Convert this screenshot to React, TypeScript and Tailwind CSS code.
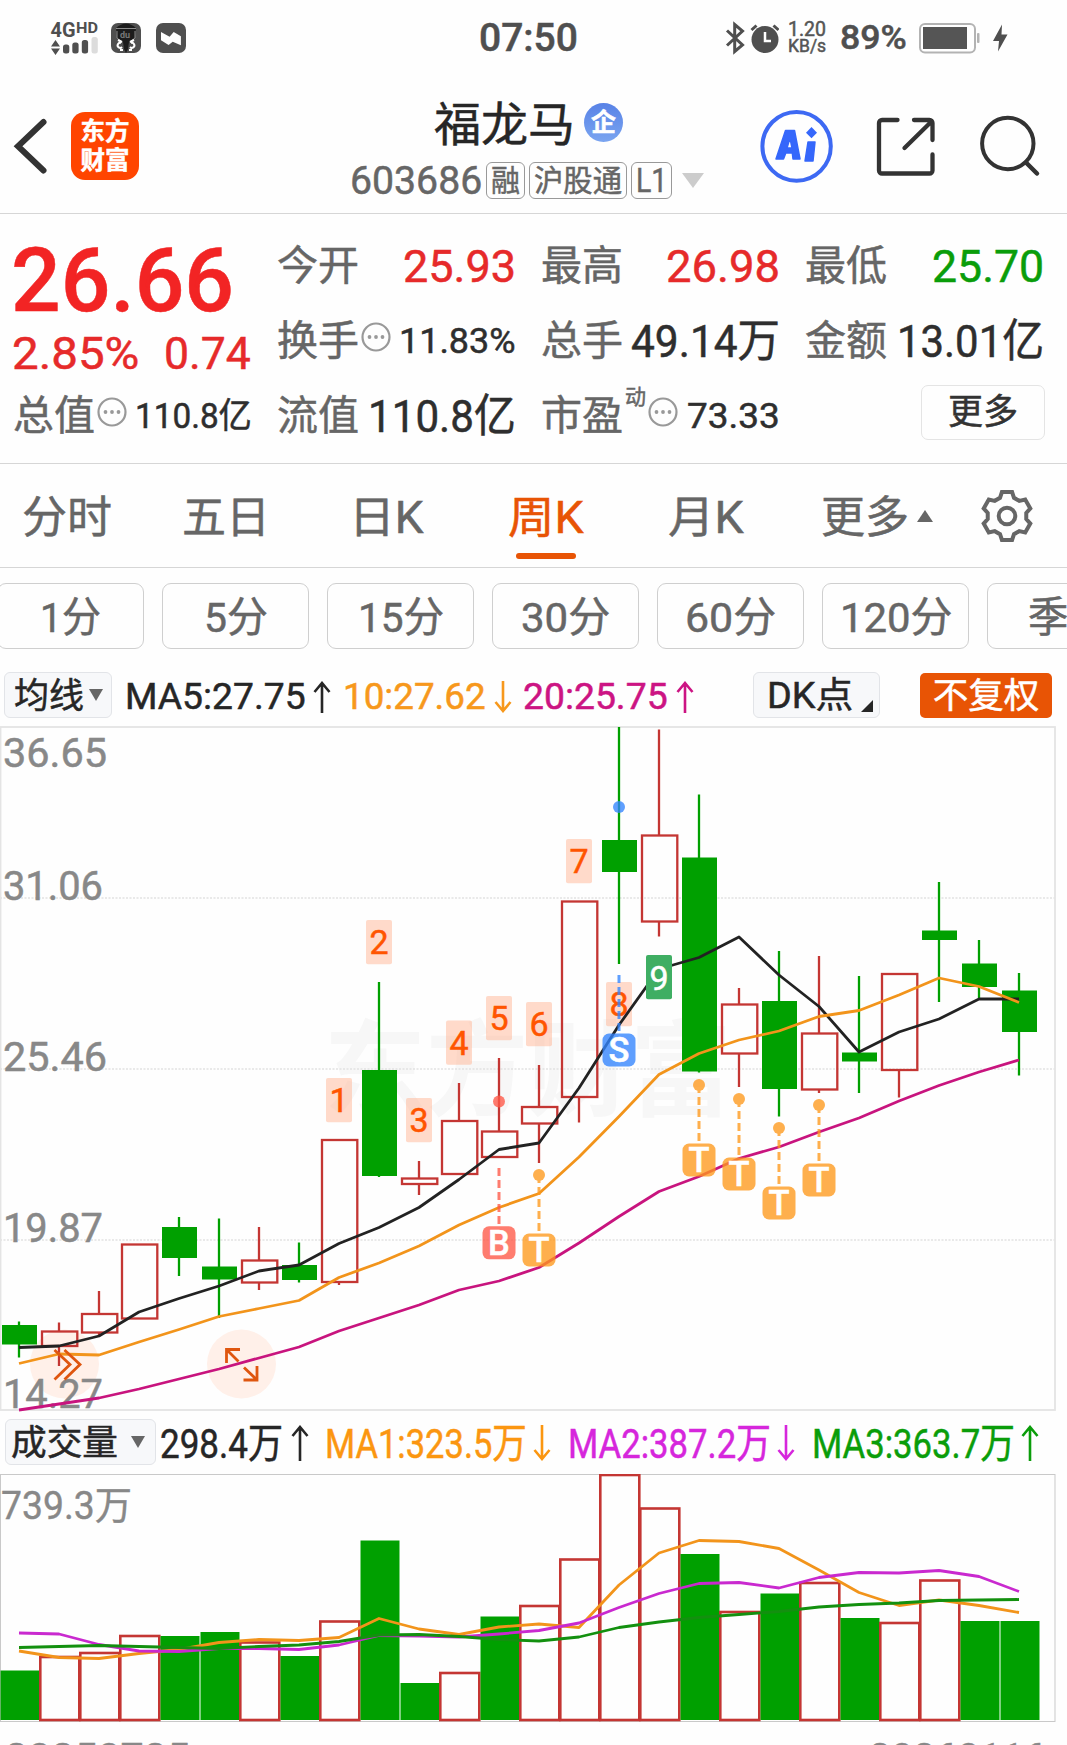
import { useLayoutEffect, useRef, useState } from "react";
import type { ReactNode } from "react";

const SANS = "Roboto, 'Noto Sans CJK SC', sans-serif";
const GREEN = "#00a000";
const RED = "#c43633";

/** Single line of text condensed or expanded to an exact advance width. */
function Fit({ w, className = "", children }: { w: number; className?: string; children: ReactNode }) {
  const ref = useRef<HTMLSpanElement>(null);
  const [k, setK] = useState(1);
  useLayoutEffect(() => {
    if (ref.current) setK(w / ref.current.offsetWidth);
  }, [w]);
  return (
    <span className={`block shrink-0 whitespace-nowrap ${className}`} style={{ width: w }}>
      <span ref={ref} className="inline-block origin-left" style={{ transform: `scaleX(${k})` }}>
        {children}
      </span>
    </span>
  );
}

function StatusBar() {
  return (
    <div className="flex h-[76px] items-center pl-[50px] text-[#4f4f4f]">
      <svg width="50" height="48" viewBox="50 12 50 48" className="block">
        <text x="50.5" y="35" fontSize="20" fontWeight="700" textLength="25" lengthAdjust="spacingAndGlyphs" fill="#4f4f4f">4G</text>
        <text x="76" y="30.5" fontSize="14.5" fontWeight="700" textLength="22" lengthAdjust="spacingAndGlyphs" fill="#4f4f4f">HD</text>
        <path d="M51 44.5L55.5 38l4.5 6.500zM51 46.500h9L55.500 53z" fill="#4f4f4f" />
        <rect x="63" y="42.500" width="6.300" height="9" rx="2.500" fill="#4f4f4f" />
        <rect x="72.300" y="40.500" width="6.300" height="11" rx="2.500" fill="#4f4f4f" />
        <rect x="81.800" y="38" width="6.300" height="13.500" rx="2.500" fill="#4f4f4f" />
        <rect x="91.500" y="35" width="6.300" height="16.500" rx="2.500" fill="#dcdcdc" />
      </svg>
      <svg width="30" height="30" viewBox="0 0 30 30" className="ml-[11px] block">
        <rect width="30" height="30" rx="7" fill="#4f4f4f" />
        <path d="M5 5Q15-4 25 5L24 15 18 19 17 26 15 30 13 26 12 19 6 15z" fill="#1c1c1c" />
        <path d="M5 5.500h20M6 8v7l5 4M24 8v7l-5 4" stroke="#8b8b8b" strokeWidth="1" fill="none" />
        <text x="9" y="14.500" fontSize="9" fontWeight="700" fill="#777">du</text>
        <path d="M7 17l4 2M23 17l-4 2M10 20a2.500 2.500 0 1 0 1 4M20 20a2.500 2.500 0 1 1-1 4M12 27h-3M18 27h3" stroke="#fff" strokeWidth="2" fill="none" />
      </svg>
      <svg width="30" height="30" viewBox="156 22 30 30" className="ml-[15px] block">
        <rect x="156" y="22" width="30" height="30" rx="7" fill="#4f4f4f" />
        <path d="M161 31l8.600 4.700L173.700 31l7.200 4.300v9L172.700 40.700 168.600 44 161 39.300z" fill="#fff" />
      </svg>
      <Fit w={99} className="ml-[293px] text-[39px] leading-[76px] font-medium">07:50</Fit>
      <svg width="54" height="34" viewBox="724 20 54 34" className="ml-[147px] block">
        <path d="M726 29.500L741.500 44l-7.800 6.500v-27L741.500 30 726 44.500" fill="none" stroke="#4f4f4f" strokeWidth="3" />
        <circle cx="764" cy="38.500" r="13.500" fill="#4f4f4f" />
        <path d="M750.500 29l5-4.500M777.500 29l-5-4.500" stroke="#4f4f4f" strokeWidth="3" />
        <path d="M764 31v9h6" fill="none" stroke="#fff" strokeWidth="2.500" />
      </svg>
      <div className="ml-[9px] flex h-[36px] flex-col text-[#555]">
        <Fit w={38} className="text-[20px] leading-[18px]">1.20</Fit>
        <Fit w={38} className="text-[17.5px] leading-[17px]">KB/s</Fit>
      </div>
      <Fit w={67} className="ml-[14px] text-[33px] leading-[76px] font-medium">89%</Fit>
      <svg width="90" height="32" viewBox="918 21 90 32" className="ml-[12px] block">
        <rect x="919" y="23" width="55" height="28.500" rx="5" fill="#fff" stroke="#b3b3b3" strokeWidth="2" />
        <rect x="922" y="26" width="44" height="22" fill="#555" />
        <rect x="976" y="32" width="2.500" height="10" rx="1" fill="#b3b3b3" />
        <path d="M1001 23.500L992 40h6l-1 10.500 9.500-17h-6z" fill="#4f4f4f" />
      </svg>
    </div>
  );
}

function Tag({ w, children }: { w: number; children: ReactNode }) {
  return (
    <span className="flex h-[37px] items-center justify-center rounded-[6px] border border-[#999] px-[4px] text-[30px] leading-[35px]">
      <Fit w={w}>{children}</Fit>
    </span>
  );
}

function Header() {
  return (
    <div className="flex h-[138px] items-start border-b border-[#d6d6d6]">
      <svg width="40" height="64" viewBox="10 114 40 64" className="mt-[38px] ml-[10px] block">
        <path d="M43.500 122L18 146.300l25.500 24.200" fill="none" stroke="#333" strokeWidth="6" strokeLinecap="round" />
      </svg>
      <div className="mt-[36px] ml-[21px] flex h-[68px] w-[68px] flex-col items-center justify-center rounded-[14px] bg-[#ff4500] text-[24.5px] leading-[29px] font-bold text-white">
        <span>东方</span>
        <span>财富</span>
      </div>
      <div className="mt-[17px] ml-[211px] flex w-[360px] flex-col">
        <div className="flex h-[60px] items-center pl-[84px]">
          <span className="pt-[3px] text-[47px] leading-[57px] text-[#262626]">福龙马</span>
          <span className="mb-[1px] ml-[9px] flex h-[39px] w-[39px] items-center justify-center rounded-full bg-linear-to-b from-[#5882e6] to-[#7ba5f0] text-[25px] leading-[39px] font-bold text-white">
            企
          </span>
        </div>
        <div className="mt-[9px] flex h-[37px] items-center gap-[4px] text-[#666]">
          <Fit w={132} className="text-[39.5px] leading-[39px]">603686</Fit>
          <Tag w={29}>融</Tag>
          <Tag w={88}>沪股通</Tag>
          <Tag w={31}>
            <span className="text-[34px]">L1</span>
          </Tag>
          <svg width="22" height="15" className="ml-[6px] block">
            <path d="M0 0h22L11 15z" fill="#ccc" />
          </svg>
        </div>
      </div>
      <svg width="74" height="76" viewBox="760 109 74 76" className="mt-[33px] ml-[50px] block">
        <ellipse cx="796.600" cy="146.300" rx="34.200" ry="34.400" fill="none" stroke="#3d69f3" strokeWidth="4" />
        <path d="M785.500 130.500h9l5.500 28.500h-7l-.7-6h-6.500l-2.300 6h-7.500zM790 138l-3 10h5z" fill="#3567fb" stroke="#3567fb" strokeWidth="1.500" strokeLinejoin="round" fillRule="evenodd" />
        <path d="M808 142h7l-2 19h-8z" fill="#3567fb" stroke="#3567fb" strokeWidth="1.500" strokeLinejoin="round" />
        <path d="M811.500 127l5.500 5.700-5.500 5.600-5.500-5.600z" fill="#3567fb" />
      </svg>
      <svg width="62" height="62" viewBox="874 116 62 62" className="mt-[40px] ml-[41px] block">
        <path d="M896.500 120H881a3 3 0 0 0-3 3v47.500a3 3 0 0 0 3 3h47.500a3 3 0 0 0 3-3V154.500M913 120h15.500a3 3 0 0 1 3 3v17M930.500 121.500L903.500 148" fill="none" stroke="#333" strokeWidth="4.300" strokeLinecap="round" />
      </svg>
      <svg width="64" height="64" viewBox="977 114 64 64" className="mt-[38px] ml-[41px] block">
        <circle cx="1006.800" cy="143.500" r="25.700" fill="none" stroke="#333" strokeWidth="4" />
        <path d="M1025 162.500l11 11" stroke="#333" strokeWidth="4.500" strokeLinecap="round" />
      </svg>
    </div>
  );
}

function Info() {
  return (
    <svg width="30" height="30" className="mr-[3px] mb-[9px] ml-[2px] block">
      <circle cx="15" cy="15" r="13.500" fill="none" stroke="#999" strokeWidth="2.200" />
      <circle cx="8.500" cy="15" r="1.900" fill="#999" />
      <circle cx="15" cy="15" r="1.900" fill="#999" />
      <circle cx="21.500" cy="15" r="1.900" fill="#999" />
    </svg>
  );
}

function Cell({ label, value, w, tone = "text-[#2e2e2e]", small = false, info = false, sup }: {
  label: string; value: string; w: number; tone?: string; small?: boolean; info?: boolean; sup?: string;
}) {
  return (
    <div className="flex h-[75px] items-center">
      <Fit w={82} className="text-[41px] leading-[77px] text-[#666]">{label}</Fit>
      {sup && <span className="mb-[40px] ml-[2px] text-[21px] leading-[30px] text-[#666]">{sup}</span>}
      {info && <Info />}
      <Fit w={w} className={`-mr-[2px] ml-auto leading-[75px] ${small ? "text-[35px]" : "text-[45px]"} ${tone}`}>{value}</Fit>
    </div>
  );
}

function Quote() {
  return (
    <div className="grid h-[250px] grid-cols-[237px_237px_237px_237px] gap-x-[27px] border-b border-[#d6d6d6] pt-[15px] pl-[13px]">
      <div>
        <Fit w={223} className="-ml-[2px] h-[102px] text-[89px] leading-[104px] font-medium text-[#f22424]">26.66</Fit>
        <div className="flex h-[48px] justify-between text-[44.5px] leading-[47px] text-[#e62a2a]">
          <Fit w={127} className="-ml-[1px]">2.85%</Fit>
          <Fit w={87} className="-mr-[1px]">0.74</Fit>
        </div>
        <Cell label="总值" info value="110.8亿" w={117} small />
      </div>
      <div>
        <Cell label="今开" value="25.93" w={113} tone="text-[#e62a2a]" />
        <Cell label="换手" info value="11.83%" w={117} small />
        <Cell label="流值" value="110.8亿" w={148} />
      </div>
      <div>
        <Cell label="最高" value="26.98" w={114} tone="text-[#e62a2a]" />
        <Cell label="总手" value="49.14万" w={149} />
        <Cell label="市盈" sup="动" info value="73.33" w={93} small />
      </div>
      <div>
        <Cell label="最低" value="25.70" w={112} tone="text-[#0a9d0a]" />
        <Cell label="金额" value="13.01亿" w={147} />
        <div className="mt-[6px] -mr-[3px] ml-auto flex h-[55px] w-[124px] items-center justify-center rounded-[7px] border-[1.5px] border-[#e4e4e4] text-[35px] leading-[51px] text-[#333]">
          更多
        </div>
      </div>
    </div>
  );
}

function gearPath(cx: number, cy: number) {
  const pts: string[] = [];
  for (let t = 0; t < 6; t++) {
    for (const [off, r] of [[-21, 19.5], [-12, 24.5], [12, 24.5], [21, 19.5]]) {
      const a = ((t * 60 + off) * Math.PI) / 180;
      pts.push(`${(cx + r * Math.sin(a)).toFixed(2)} ${(cy - r * Math.cos(a)).toFixed(2)}`);
    }
  }
  return `M${pts.join("L")}z`;
}

function Tabs() {
  return (
    <div className="flex h-[104px] items-start border-b border-[#d6d6d6] pl-[22px] text-[44px] leading-[109px] text-[#666]">
      <Fit w={90}>分时</Fit>
      <Fit w={88} className="ml-[70px]">五日</Fit>
      <Fit w={75} className="ml-[79px]">日K</Fit>
      <div className="ml-[84px] flex flex-col items-center text-[#e85405]">
        <Fit w={76} className="h-[89px]">周K</Fit>
        <span className="h-[6px] w-[60px] rounded-full bg-[#e85405]" />
      </div>
      <Fit w={76} className="ml-[84px]">月K</Fit>
      <Fit w={88} className="ml-[77px]">更多</Fit>
      <svg width="16" height="12" className="mt-[46px] ml-[8px] block">
        <path d="M0 12L8 0l8 12z" fill="#666" />
      </svg>
      <svg width="56" height="56" className="mt-[24px] ml-[46px] block">
        <path d={gearPath(28, 28)} fill="none" stroke="#666" strokeWidth="4" />
        <circle cx="28" cy="28" r="8.300" fill="none" stroke="#666" strokeWidth="4" />
      </svg>
    </div>
  );
}

function Periods() {
  const items: [string, number][] = [["1分", 61], ["5分", 64], ["15分", 86], ["30分", 89], ["60分", 91], ["120分", 112], ["季K", 66]];
  return (
    <div className="flex h-[98px] gap-[18px] overflow-hidden pt-[15px]">
      {items.map(([t, w], i) => (
        <div
          key={t}
          className={`flex h-[66px] w-[147px] shrink-0 items-center justify-center rounded-[9px] border border-[#cfcfcf] pt-[3px] text-[41.5px] leading-[61px] text-[#666] ${i === 0 ? "-ml-[3px]" : ""}`}
        >
          <Fit w={w}>{t}</Fit>
        </div>
      ))}
    </div>
  );
}

function Arrow({ up, h, className = "" }: { up?: boolean; h: number; className?: string }) {
  return (
    <svg width="18" height={h} className={`block shrink-0 ${className}`} fill="none" stroke="currentColor" strokeWidth="2.600">
      {up ? <path d={`M9 2V${h}M1.500 11L9 2l7.500 9`} /> : <path d={`M9 0V${h - 2}M1.500 ${h - 11}L9 ${h - 2}l7.500-9`} />}
    </svg>
  );
}

function Select({ label, w, className }: { label: string; w: number; className: string }) {
  return (
    <div className={`flex h-[46px] shrink-0 items-center justify-between rounded-[6px] border border-[#e2e4e8] bg-[#f7f8fa] text-[35px] leading-[40px] text-[#262626] ${className}`}>
      <Fit w={w} className="pt-[4px]">{label}</Fit>
      <svg width="14" height="12" className="block">
        <path d="M0 0h14L7 12z" fill="#666" />
      </svg>
    </div>
  );
}

function MaRow() {
  return (
    <div className="flex h-[61px] items-start pt-[5px] pl-[4px] text-[36px] leading-[46px]">
      <Select label="均线" w={70} className="mt-[1px] w-[108px] pr-[8px] pl-[9px]" />
      <Fit w={181} className="mt-[3px] ml-[13px] text-[#262626]">MA5:27.75</Fit>
      <Arrow up h={32} className="mt-[10px] ml-[7px] text-[#262626]" />
      <Fit w={143} className="mt-[3px] ml-[12px] text-[#f7981c]">10:27.62</Fit>
      <Arrow h={32} className="mt-[10px] ml-[8px] text-[#f7981c]" />
      <Fit w={145} className="mt-[3px] ml-[11px] text-[#cc1483]">20:25.75</Fit>
      <Arrow up h={32} className="mt-[10px] ml-[8px] text-[#cc1483]" />
      <div className="mt-[1px] ml-[59px] flex h-[46px] w-[127px] items-end rounded-[6px] border border-[#e2e4e8] bg-[#f7f8fa] pb-[5px] pl-[13px] text-[#262626]">
        <Fit w={86} className="-mb-[7px] leading-[46px]">DK点</Fit>
        <svg width="12" height="12" className="ml-[8px] block">
          <path d="M12 0v12H0z" fill="#262626" />
        </svg>
      </div>
      <div className="mt-[2px] ml-[40px] flex h-[45px] w-[132px] items-center justify-center rounded-[5px] bg-[#e85405] pt-[1px] text-[35.5px] leading-[44px] text-white">
        不复权
      </div>
    </div>
  );
}

const cx = (i: number) => 19 + 40 * i;
const line = (ys: number[]) => ys.map((y, i) => `${cx(i)},${y}`).join(" ");

// [rising, body top, body bottom, high, low]
const CANDLES: [boolean, number, number, number, number][] = [
  [false, 1325, 1344.5, 1321.5, 1357.5], [true, 1331.5, 1346, 1322.5, 1366], [true, 1314, 1332.5, 1291, 1335],
  [true, 1244.5, 1318.5, 1244.5, 1318.5], [false, 1227, 1258, 1217, 1276], [false, 1266.5, 1279.5, 1218.5, 1318],
  [true, 1260.5, 1282.5, 1227, 1290], [false, 1265, 1280, 1242.5, 1282.5], [true, 1140, 1282, 1140, 1285],
  [false, 1070, 1176, 982, 1177], [true, 1178.5, 1184, 1161, 1195], [true, 1121, 1174, 1083, 1174],
  [true, 1131.5, 1157, 1058, 1157], [true, 1107, 1123.5, 1065, 1163], [true, 901.5, 1097, 901, 1122.5],
  [false, 840, 872, 727, 964], [true, 835.5, 921.5, 729.5, 936.5], [false, 857.5, 1071.5, 794.5, 1072.5],
  [true, 1004.5, 1053.5, 988, 1087], [false, 1001, 1089, 951, 1116.5], [true, 1033.5, 1089.5, 956, 1093],
  [false, 1052.5, 1061.5, 976, 1093], [true, 974, 1070, 974, 1097.5], [false, 930.5, 940, 882, 1002],
  [false, 963.5, 987, 940, 998], [false, 990.5, 1032, 973, 1075.5],
];
const MA5 = [1347.5, 1346, 1336, 1312, 1298.5, 1286, 1271, 1265, 1243.5, 1227.5, 1207.5, 1179.5, 1149.5, 1143, 1088, 1025, 969, 957.5, 937, 975, 1006.5, 1052, 1032, 1019, 999, 999];
const MA10 = [1363.5, 1354, 1355, 1342, 1329.5, 1316.5, 1308.5, 1300.5, 1277.5, 1263, 1246, 1225, 1207.5, 1193.5, 1157, 1116.5, 1074.5, 1053.5, 1040, 1031, 1016.5, 1010.5, 995, 978, 986.5, 1002.5];
const MA20 = [1410, 1404, 1398, 1389, 1379, 1369, 1358, 1347, 1331, 1318, 1305, 1290, 1281, 1267.5, 1243, 1216.5, 1191.5, 1176.5, 1158.5, 1147, 1132, 1118, 1101, 1085.5, 1072, 1060];

// [candle index, digit, top]
const COUNTS: [number, string, number][] = [[8, "1", 1078], [9, "2", 920], [10, "3", 1098], [11, "4", 1020.5], [12, "5", 996], [13, "6", 1002], [14, "7", 839], [15, "8", 982]];

// [candle index, letter, dot y, dash start, box top, colour]
const SIGNALS: [number, string, number, number, number, string][] = [
  [12, "B", 1101.5, 1168, 1226.3, "#ff5847"], [13, "T", 1175, 1175, 1233.5, "#ff991c"], [15, "S", 807, 975, 1033.5, "#3385ff"],
  [17, "T", 1085, 1085, 1143.5, "#ff991c"], [18, "T", 1099, 1099, 1157.5, "#ff991c"], [19, "T", 1128, 1128, 1186.5, "#ff991c"], [20, "T", 1105, 1105, 1163.5, "#ff991c"],
];

const PRICES: [string, number, number][] = [["36.65", 767, 104], ["31.06", 900, 100], ["25.46", 1070.5, 104], ["19.87", 1241.5, 100], ["14.27", 1408, 100]];

function KChart() {
  return (
    <svg width="1067" height="686" viewBox="0 726 1067 686" className="block" fontFamily={SANS}>
      <text x="324" y="1108" fontSize="104" fontWeight="700" fill="#f7f7f7" textLength="408" lengthAdjust="spacingAndGlyphs">东方财富</text>
      {[898, 1069, 1240].map((y) => (
        <line key={y} x1="0" x2="1055" y1={y} y2={y} stroke="#e2e2e2" strokeWidth="1.500" strokeDasharray="2 1.500" />
      ))}
      <rect x="0.500" y="727" width="1054.500" height="683" fill="none" stroke="#e4e4e4" strokeWidth="1.800" />
      <circle cx="64.500" cy="1364" r="34.500" fill="#fff0e9" />
      <circle cx="241.500" cy="1364" r="34.500" fill="#fff0e9" />
      {PRICES.map(([t, y, w]) => (
        <text key={t} x="3" y={y} fontSize="40.500" fill="#888" stroke="#888" strokeWidth="0.500" textLength={w} lengthAdjust="spacingAndGlyphs">{t}</text>
      ))}
      {CANDLES.map(([up, t, b, hi, lo], i) =>
        up ? (
          <g key={i} stroke={RED} strokeWidth="2.300" fill="none">
            <path d={`M${cx(i)} ${hi}V${t}M${cx(i)} ${b}V${lo}`} />
            <rect x={cx(i) - 17} y={t} width="35.300" height={b - t} />
          </g>
        ) : (
          <g key={i}>
            <line x1={cx(i)} x2={cx(i)} y1={hi} y2={lo} stroke={GREEN} strokeWidth="2.300" />
            <rect x={cx(i) - 17} y={t} width="35" height={b - t} fill={GREEN} />
          </g>
        ),
      )}
      {COUNTS.map(([i, d, t]) => (
        <g key={d}>
          <rect x={cx(i) - 13} y={t} width="26" height="44.300" rx="2" fill="#ffb595" fillOpacity="0.500" />
          <text x={cx(i)} y={t + 34} fontSize="34" fill="#ff5500" stroke="#ff5500" strokeWidth="0.500" textAnchor="middle">{d}</text>
        </g>
      ))}
      <g fill="none" strokeWidth="2.800" strokeLinejoin="round">
        <polyline points={line(MA5)} stroke="#222" />
        <polyline points={line(MA10)} stroke="#f2941b" />
        <polyline points={line(MA20)} stroke="#c8147e" />
      </g>
      <rect x={cx(16) - 13} y="955" width="26" height="44.300" rx="2" fill="#3fae63" />
      <text x={cx(16)} y="989.500" fontSize="34" fill="#fff" stroke="#fff" strokeWidth="0.500" textAnchor="middle">9</text>
      {SIGNALS.map(([i, s, dot, dash, top, c]) => (
        <g key={i}>
          <g opacity="0.780">
            <circle cx={cx(i)} cy={dot} r="6" fill={c} />
            <line x1={cx(i)} x2={cx(i)} y1={dash} y2={top - 2} stroke={c} strokeWidth="3" strokeDasharray="8 4" />
            <rect x={cx(i) - 16.500} y={top} width="33" height="33" rx="6.500" fill={c} />
          </g>
          <text x={cx(i)} y={top + 28.700} fontSize="34.500" fontWeight="500" fill="#fff" stroke="#fff" strokeWidth="0.500" textAnchor="middle">{s}</text>
        </g>
      ))}
      <g fill="none" stroke="#df560f" strokeWidth="2.800">
        <path d="M54.500 1350L70 1364.500 54.500 1379.500M64.500 1350L80 1364.500 64.500 1379.500" />
        <path d="M240 1349.500H226.500V1363M227 1350l11.500 11.500M243.500 1380H257V1366M244 1367.500l12.500 12" />
      </g>
    </svg>
  );
}

function VolRow() {
  return (
    <div className="flex h-[62px] items-start pt-[7px] pl-[5px] text-[41px] leading-[50px]">
      <Select label="成交量" w={107} className="w-[151px] pr-[10px] pl-[5px]" />
      <Fit w={123} className="ml-[4px] text-[#262626]">298.4万</Fit>
      <Arrow up h={36} className="mt-[6px] ml-[8px] text-[#262626]" />
      <Fit w={202} className="ml-[16px] text-[#fb9610]">MA1:323.5万</Fit>
      <Arrow h={36} className="mt-[6px] ml-[6px] text-[#fb9610]" />
      <Fit w={203} className="ml-[17px] text-[#d626dc]">MA2:387.2万</Fit>
      <Arrow h={36} className="mt-[6px] ml-[6px] text-[#d626dc]" />
      <Fit w={203} className="ml-[17px] text-[#0a9d0a]">MA3:363.7万</Fit>
      <Arrow up h={36} className="mt-[6px] ml-[6px] text-[#0a9d0a]" />
    </div>
  );
}

// [rising, bar top]
const BARS: [boolean, number][] = [
  [false, 1671], [true, 1657], [true, 1653], [true, 1636], [false, 1636.5], [false, 1632.5], [true, 1642.5], [false, 1656.5],
  [true, 1621.5], [false, 1541], [false, 1683.5], [true, 1673], [false, 1617], [true, 1606], [true, 1559.5], [true, 1475],
  [true, 1508.5], [false, 1554.5], [true, 1612], [false, 1594], [true, 1583], [false, 1618.5], [true, 1623], [true, 1580.5],
  [false, 1621.5], [false, 1621.5],
];
const V1 = [1651, 1657.5, 1658.5, 1653.5, 1649.5, 1642.5, 1639.5, 1640.5, 1637.5, 1618.5, 1629, 1634.5, 1627, 1624, 1627.5, 1585, 1553, 1540.5, 1541.5, 1548.5, 1570, 1592.5, 1605.5, 1600, 1605.5, 1612.5];
const V2 = [1633, 1634, 1644.5, 1651, 1651.5, 1648.5, 1648.5, 1649.5, 1645, 1635.5, 1636, 1637, 1634, 1630.5, 1623, 1607.5, 1593.5, 1583.5, 1582.5, 1588, 1577.5, 1572.5, 1573, 1570.5, 1576.5, 1591.5];
const V3 = [1647.5, 1646.5, 1645.5, 1646.5, 1647.5, 1648.5, 1646.5, 1645, 1641.5, 1635, 1634.5, 1636.5, 1639.5, 1641, 1637, 1627.5, 1622, 1617.5, 1614.5, 1611.5, 1607, 1604.5, 1603, 1600.5, 1600, 1599.5];

function VolChart() {
  return (
    <svg width="1067" height="249" viewBox="0 1474 1067 249" className="block" fontFamily={SANS}>
      <rect x="0.500" y="1474.500" width="1054.500" height="247" fill="none" stroke="#c9c9c9" strokeWidth="1" />
      <text x="1" y="1518.500" fontSize="39" fill="#888" stroke="#888" strokeWidth="0.400" textLength="131" lengthAdjust="spacingAndGlyphs">739.3万</text>
      {BARS.map(([up, t], i) =>
        up ? (
          <rect key={i} x={cx(i) - 18.700} y={t} width="39" height={1720 - t} fill="none" stroke={RED} strokeWidth="2.600" />
        ) : (
          <rect key={i} x={cx(i) - 18.500} y={t - 0.500} width="39" height={1720.500 - t} fill={GREEN} />
        ),
      )}
      <g fill="none" strokeWidth="2.800" strokeLinejoin="round">
        <polyline points={line(V1)} stroke="#f2941b" />
        <polyline points={line(V2)} stroke="#c929cf" />
        <polyline points={line(V3)} stroke="#13900f" />
      </g>
    </svg>
  );
}

export default function App() {
  return (
    <div className="h-[1745px] w-[1067px] overflow-hidden bg-[#fefefe] [-webkit-text-stroke:0.5px]" style={{ fontFamily: SANS }}>
      <StatusBar />
      <Header />
      <Quote />
      <Tabs />
      <Periods />
      <MaRow />
      <div className="-mt-px">
        <KChart />
      </div>
      <VolRow />
      <VolChart />
      <div className="flex justify-between pt-[14px] pr-[21px] pl-[5px] text-[40px] leading-[44px] text-[#888]">
        <Fit w={185}>20250725</Fit>
        <Fit w={177}>20260116</Fit>
      </div>
    </div>
  );
}
